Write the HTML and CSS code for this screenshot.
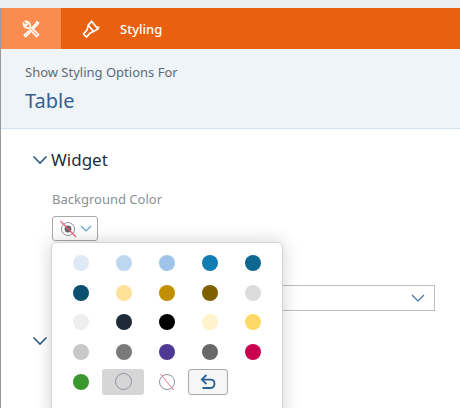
FILE: index.html
```html
<!DOCTYPE html>
<html>
<head>
    <title>Styling</title>
    <link rel="stylesheet" href="styles.css">
</head>
<body>
    <div class="panel">
        <div class="tabbar">
            <div class="tab tab-active">
                <svg width="18" height="18" viewBox="0 0 18 18" fill="none" stroke="#fff" stroke-width="1.5">
                    <path d="M6.6 7.8 C4 8.6 1.2 6.6 1.4 3.4 L4 5.8 L5.8 4 L3.4 1.4 C6.6 1 8.8 3.6 8 6.2 L16.6 14.6 L14.6 16.6 L6.6 7.8"/>
                    <path d="M9.8 8 L14 3.6 L14.6 1.6 L16.6 3 L15.2 4.8 L11 9.2 M7.6 10.4 L2.2 15 L3.6 16.6 L8.8 11.6"/>
                </svg>
            </div>
            <div class="tab">
                <svg width="18" height="18" viewBox="0 0 18 18" fill="none" stroke="#fff" stroke-width="1.7">
                    <path d="M9.6 1.4 L16 9 L11.4 11.4 L6.2 5 Z"/>
                    <path d="M6.4 5.6 L4.8 10.4 L1.4 14 L4.6 17 L8 13.2 L11.6 11.2"/>
                    <path d="M15.6 6.4 L17.4 8.2" stroke="#ffd9a8"/>
                </svg>
            </div>
            <span class="tab-title">Styling</span>
        </div>

        <div class="header">
            <div class="header-sub">Show Styling Options For</div>
            <div class="header-title">Table</div>
        </div>

        <div class="section">
            <div class="section-head">
                <svg class="chevron" width="16" height="10" viewBox="0 0 16 10" fill="none" stroke="#2f5a86" stroke-width="1.6"><path d="M1.5 1.5 L8 8 L14.5 1.5"/></svg>
                <span>Widget</span>
            </div>
            <div class="field-label">Background Color</div>
            <div class="color-button">
                <svg width="18" height="19" viewBox="0 0 18 19" fill="none">
                    <circle cx="9" cy="10" r="6.5" stroke="#8a94a0"/>
                    <circle cx="9" cy="10" r="3.4" fill="#666"/>
                    <path d="M1.5 2 L17 18" stroke="#ee5a78" stroke-width="1.1"/>
                </svg>
                <svg width="12" height="8" viewBox="0 0 12 8" fill="none" stroke="#5d9fd8" stroke-width="1.1"><path d="M1 1 L6 6 L11 1"/></svg>
            </div>
            <div class="select">
                <svg width="14" height="8" viewBox="0 0 14 8" fill="none" stroke="#3f6f9f" stroke-width="1.1"><path d="M1 1 L7 7 L13 1"/></svg>
            </div>
            <svg class="chevron chevron-second" width="16" height="10" viewBox="0 0 16 10" fill="none" stroke="#2f5a86" stroke-width="1.6"><path d="M1.5 1.5 L8 8 L14.5 1.5"/></svg>
        </div>

        <div class="popup">
            <div class="swatches">
                <div class="cell"><i class="dot c1"></i></div>
                <div class="cell"><i class="dot c2"></i></div>
                <div class="cell"><i class="dot c3"></i></div>
                <div class="cell"><i class="dot c4"></i></div>
                <div class="cell"><i class="dot c5"></i></div>
                <div class="cell"><i class="dot c6"></i></div>
                <div class="cell"><i class="dot c7"></i></div>
                <div class="cell"><i class="dot c8"></i></div>
                <div class="cell"><i class="dot c9"></i></div>
                <div class="cell"><i class="dot c10"></i></div>
                <div class="cell"><i class="dot c11"></i></div>
                <div class="cell"><i class="dot c12"></i></div>
                <div class="cell"><i class="dot c13"></i></div>
                <div class="cell"><i class="dot c14"></i></div>
                <div class="cell"><i class="dot c15"></i></div>
                <div class="cell"><i class="dot c16"></i></div>
                <div class="cell"><i class="dot c17"></i></div>
                <div class="cell"><i class="dot c18"></i></div>
                <div class="cell"><i class="dot c19"></i></div>
                <div class="cell"><i class="dot c20"></i></div>
                <div class="cell"><i class="dot c21"></i></div>
                <div class="cell cell-selected"><i class="dot dot-empty"></i></div>
                <div class="cell">
                    <svg width="18" height="18" viewBox="0 0 18 18" fill="none">
                        <circle cx="9" cy="9" r="7.5" stroke="#8a94a0"/>
                        <path d="M2.5 1 L15.5 17" stroke="#f0708a" stroke-width="1"/>
                    </svg>
                </div>
                <div class="cell cell-undo">
                    <div class="undo">
                        <svg width="16" height="16" viewBox="0 0 16 16" fill="none" stroke="#2a6195" stroke-width="1.8">
                            <path d="M6.4 1 L1.8 5.6 L6.4 10"/>
                            <path d="M2 5.6 H10.5 C15.8 5.6 15.8 14 10.5 14 H2.5"/>
                        </svg>
                    </div>
                </div>
            </div>
        </div>
    </div>
</body>
</html>
```

FILE: styles.css
```css
html, body {
    margin: 0;
    height: 100%;
    overflow: hidden;
}

body {
    font-family: "Noto Sans", "Open Sans", Arial, sans-serif;
    background-color: #eceff2;
    padding-top: 8px;
    box-sizing: border-box;
}

.panel {
    position: relative;
    height: 400px;
    background-color: #fff;
    border-left: 1px solid #9a9a9a;
    box-sizing: border-box;
}

.tabbar {
    display: flex;
    align-items: center;
    height: 41px;
    background-color: #e9610e;
    color: #fff;
}

.tab {
    width: 60px;
    height: 41px;
    display: flex;
    align-items: center;
    justify-content: center;
}

.tab-active {
    background-color: #fb8c4f;
}

.tab + .tab {
    width: 59px;
}

.tab-title {
    font-size: 13px;
    font-weight: 500;
}

.header {
    height: 80px;
    padding: 15px 0 0 24px;
    box-sizing: border-box;
    background-color: #eff4f9;
    border-bottom: 1px solid #cfe0f0;
}

.header-sub {
    font-size: 13px;
    line-height: 17px;
    color: #5e6a75;
}

.header-title {
    font-size: 20px;
    line-height: 25px;
    margin-top: 7px;
    color: #35618f;
}

.section {
    padding: 20px 0 0 31px;
}

.section-head {
    display: flex;
    align-items: center;
    gap: 3px;
    font-size: 17px;
    line-height: 22px;
    color: #1f2d3d;
}

.field-label {
    margin: 20px 0 0 20px;
    font-size: 13px;
    line-height: 17px;
    color: #8a8f94;
}

.color-button {
    display: flex;
    align-items: center;
    gap: 3px;
    width: 46px;
    height: 25px;
    margin: 8px 0 0 20px;
    padding-left: 6px;
    box-sizing: border-box;
    border: 1px solid #a9a9a9;
    border-radius: 3px;
    background-color: #fff;
}

.select {
    display: flex;
    align-items: center;
    justify-content: flex-end;
    width: 383px;
    height: 26px;
    margin: 44px 0 0 20px;
    padding-right: 9px;
    box-sizing: border-box;
    border: 1px solid #bdbdbd;
}

.chevron-second {
    display: block;
    margin-top: 25px;
}

.popup {
    position: absolute;
    left: 50px;
    top: 234px;
    width: 232px;
    height: 180px;
    box-sizing: border-box;
    padding: 5px 0 0 7px;
    background-color: #fff;
    border: 1px solid #d4d4d4;
    border-radius: 5px;
    box-shadow: 0 0 18px rgba(0, 0, 0, 0.18);
}

.swatches {
    display: grid;
    grid-template-columns: repeat(5, 43px);
    grid-auto-rows: 29.7px;
}

.cell {
    display: flex;
    align-items: center;
    justify-content: center;
}

.dot {
    display: block;
    width: 16px;
    height: 16px;
    border-radius: 50%;
}

.cell-selected {
    width: 42px;
    height: 26px;
    align-self: center;
    background-color: #d6d6d6;
    border-radius: 3px;
}

.dot-empty {
    width: 17px;
    height: 17px;
    box-sizing: border-box;
    border: 1px solid #8a94a0;
}

.cell-undo {
    justify-content: flex-start;
}

.undo {
    display: flex;
    align-items: center;
    justify-content: center;
    width: 40px;
    height: 26px;
    box-sizing: border-box;
    background-color: #f6f6f6;
    border: 1px solid #a9a9a9;
    border-radius: 3px;
}

.c1 { background-color: #dee9f6; }
.c2 { background-color: #bdd7f0; }
.c3 { background-color: #9fc4e8; }
.c4 { background-color: #107eb3; }
.c5 { background-color: #0d6790; }
.c6 { background-color: #0b4f71; }
.c7 { background-color: #ffe299; }
.c8 { background-color: #c09000; }
.c9 { background-color: #7f6000; }
.c10 { background-color: #dcdcdc; }
.c11 { background-color: #eeeeee; }
.c12 { background-color: #202938; }
.c13 { background-color: #000000; }
.c14 { background-color: #fff2cc; }
.c15 { background-color: #ffd966; }
.c16 { background-color: #c8c8c8; }
.c17 { background-color: #7a7a7a; }
.c18 { background-color: #4e3a92; }
.c19 { background-color: #696969; }
.c20 { background-color: #c9004f; }
.c21 { background-color: #3a982f; }
```
